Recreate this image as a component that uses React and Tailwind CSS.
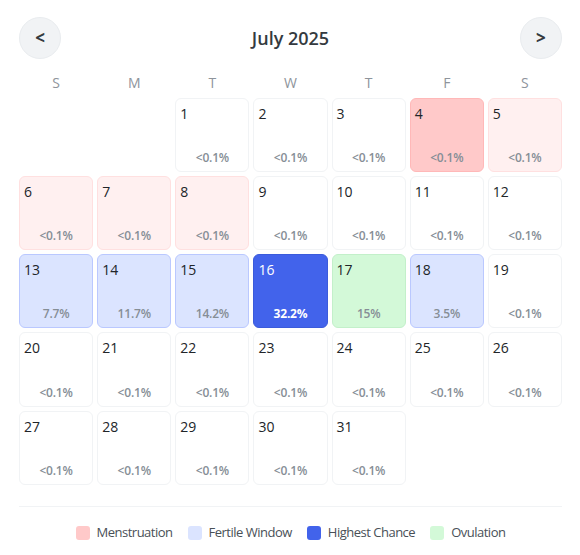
import React from "react";

const special = {
  4: "menHeavy",
  5: "menLight",
  6: "menLight",
  7: "menLight",
  8: "menLight",
  13: "fertile",
  14: "fertile",
  15: "fertile",
  16: "highest",
  17: "ovulation",
  18: "fertile",
};
const pct = { 13: "7.7%", 14: "11.7%", 15: "14.2%", 16: "32.2%", 17: "15%", 18: "3.5%" };

const styles = {
  normal: "bg-white border-[#f1f3f5] text-[#212529]",
  menHeavy: "bg-[#ffc9c9] border-[#ffb8b8] text-[#212529]",
  menLight: "bg-[#fff0f0] border-[#ffe0e0] text-[#212529]",
  fertile: "bg-[#dbe4ff] border-[#bac8ff] text-[#212529]",
  highest: "bg-[#4263eb] border-[#3b5bdb] text-white",
  ovulation: "bg-[#d3f9d8] border-[#c3f0ca] text-[#212529]",
};

function Cell({ d }) {
  const type = special[d] || "normal";
  const p = pct[d] || "<0.1%";
  const hi = type === "highest";
  return (
    <div className={`aspect-square rounded-[6px] border flex flex-col justify-between px-[4px] pt-[5px] pb-[4px] ${styles[type]}`}>
      <div className="text-[14px] leading-[20px]">{d}</div>
      <div className={`text-center text-[12px] leading-[18px] tracking-[-0.2px] ${hi ? "text-white font-bold" : "text-[#868e96] font-semibold"}`}>{p}</div>
    </div>
  );
}

export default function App() {
  const cells = [null, null];
  for (let i = 1; i <= 31; i++) cells.push(i);
  const legend = [
    ["bg-[#ffc9c9]", "Menstruation"],
    ["bg-[#dbe4ff]", "Fertile Window"],
    ["bg-[#4263eb]", "Highest Chance"],
    ["bg-[#d3f9d8]", "Ovulation"],
  ];
  return (
    <div className="w-[580px] h-[555px] bg-white pl-[19px] pr-[18px] pt-[17px]" style={{ fontFamily: '"Open Sans", "Noto Sans", sans-serif' }}>
      <div className="flex items-center justify-between h-[42px]">
        <button className="w-[42px] h-[42px] rounded-full bg-[#f1f3f5] border border-[#e9ecef] flex items-center justify-center text-[#343a40] text-[17px] font-bold">&lt;</button>
        <div className="text-[18px] font-semibold text-[#343a40]">July 2025</div>
        <button className="w-[42px] h-[42px] rounded-full bg-[#f1f3f5] border border-[#e9ecef] flex items-center justify-center text-[#343a40] text-[17px] font-bold">&gt;</button>
      </div>
      <div className="grid grid-cols-7 gap-x-[4px] mt-[14px] mb-[5px] h-[20px]">
        {["S", "M", "T", "W", "T", "F", "S"].map((w, i) => (
          <div key={i} className="text-center text-[14px] leading-[20px] font-medium text-[#8e949b]">{w}</div>
        ))}
      </div>
      <div className="grid grid-cols-7 gap-[4px]">
        {cells.map((d, i) => (d ? <Cell key={i} d={d} /> : <div key={i} />))}
      </div>
      <div className="mt-[21px] border-t border-[#f1f3f5] pt-[16px] flex justify-center items-center gap-[15px]">
        {legend.map(([c, t]) => (
          <div key={t} className="flex items-center gap-[7px]">
            <div className={`w-[14px] h-[14px] rounded-[3px] ${c}`} />
            <span className="text-[13px] tracking-[-0.5px] text-[#495057]">{t}</span>
          </div>
        ))}
      </div>
    </div>
  );
}
